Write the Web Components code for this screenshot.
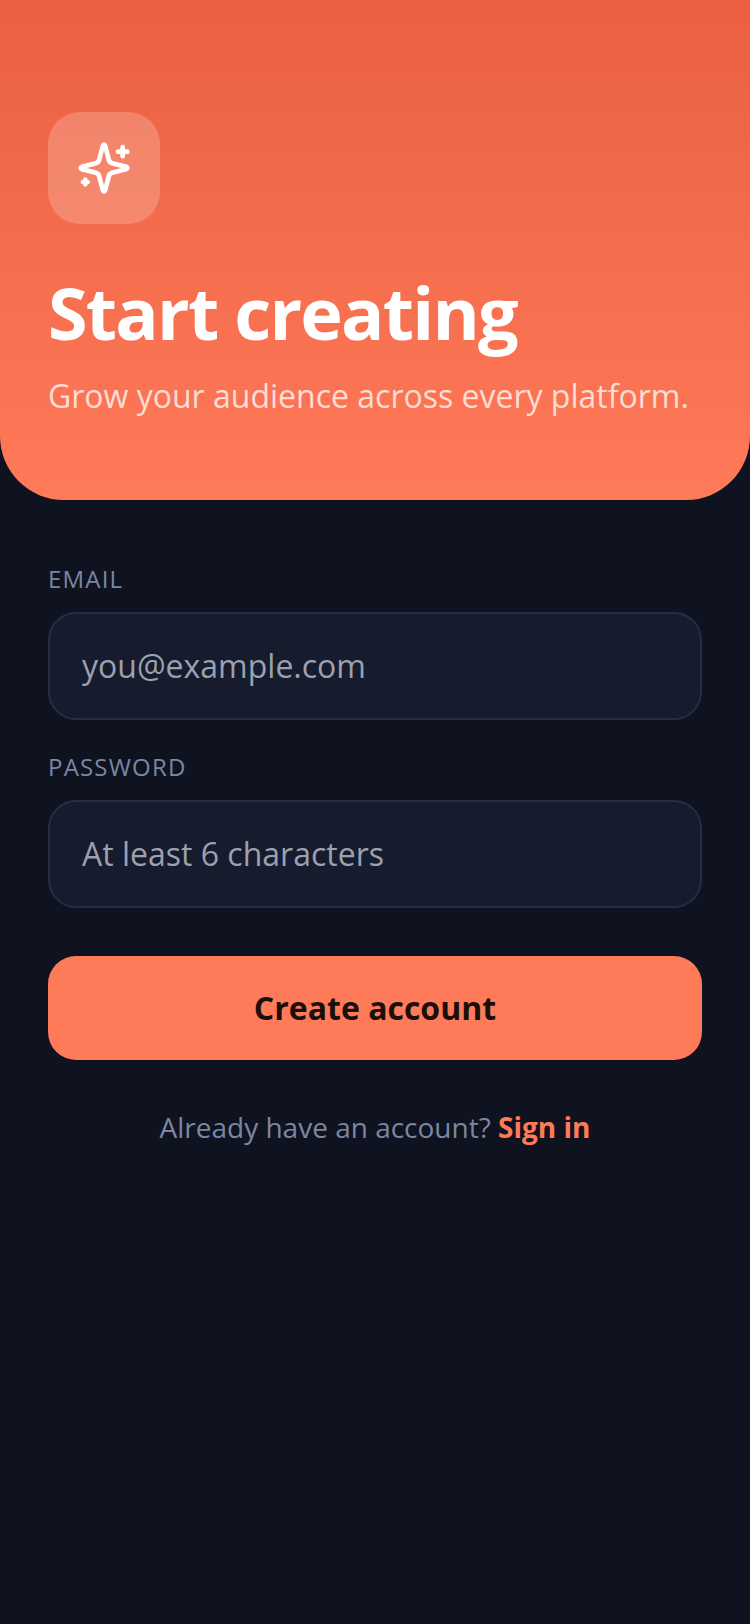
<!DOCTYPE html>
<html><head><meta charset="utf-8"><style>
html,body{margin:0;padding:0;background:#0f131f;}
body{font-family:"Open Sans",sans-serif;width:750px;height:1624px;overflow:hidden;}
</style></head><body>
<signup-screen>
<hero-panel title-text="Start creating" sub="Grow your audience across every platform."></hero-panel>
<form-panel>
<text-field label="EMAIL" placeholder="you@example.com"></text-field>
<text-field label="PASSWORD" placeholder="At least 6 characters"></text-field>
<primary-button>Create account</primary-button>
<p-footer>Already have an account? <b>Sign in</b></p-footer>
</form-panel>
</signup-screen>
<script>
function def(name,html,init){customElements.define(name,class extends HTMLElement{constructor(){super();this.attachShadow({mode:'open'}).innerHTML=html;}connectedCallback(){if(init)init(this);}});}
def('signup-screen',`<style>:host{display:flex;flex-direction:column;width:750px;height:1624px;background:#0f131f}</style><slot></slot>`);
def('hero-panel',`<style>
:host{display:block;box-sizing:border-box;height:500px;padding:112px 48px 0;border-radius:0 0 64px 64px;background:linear-gradient(180deg,#ea6040 0%,#ff7a59 100%)}
.ic{width:112px;height:112px;box-sizing:border-box;border-radius:32px;background:rgba(255,255,255,.2);display:flex;align-items:center;justify-content:center}
h1{margin:45px 0 0;font-size:72px;line-height:86px;font-weight:700;letter-spacing:-1.8px;color:#fff}
p{margin:19px 0 0;font-size:32px;line-height:44px;color:rgba(255,255,255,.75)}
</style><div class="ic"><svg width="56" height="56" viewBox="0 0 24 24" fill="none" stroke="#fff" stroke-width="2" stroke-linecap="round" stroke-linejoin="round"><path d="M9.937 15.5A2 2 0 0 0 8.5 14.063l-6.135-1.582a.5.5 0 0 1 0-.962L8.5 9.936A2 2 0 0 0 9.937 8.5l1.582-6.135a.5.5 0 0 1 .963 0L14.063 8.5A2 2 0 0 0 15.5 9.937l6.135 1.581a.5.5 0 0 1 0 .964L15.5 14.063a2 2 0 0 0-1.437 1.437l-1.582 6.135a.5.5 0 0 1-.963 0z"/><path d="M20 3v4"/><path d="M22 5h-4"/><path d="M4 17v2"/><path d="M5 18H3"/></svg></div><h1></h1><p></p>`,el=>{el.shadowRoot.querySelector('h1').textContent=el.getAttribute('title-text');el.shadowRoot.querySelector('p').textContent=el.getAttribute('sub');});
def('form-panel',`<style>:host{display:block;padding:63px 48px 0}</style><slot></slot>`);
def('text-field',`<style>
:host{display:block;margin-bottom:31px}
label{display:block;font-size:24px;line-height:32px;letter-spacing:1.2px;color:#7a86a3;margin-bottom:17px}
.b{box-sizing:border-box;height:108px;border:2px solid #262d48;border-radius:28px;background:#161b2e;padding:0 32px 1px;display:flex;align-items:center;font-size:32px;color:#9ba1ad}
</style><label></label><div class="b"></div>`,el=>{el.shadowRoot.querySelector('label').textContent=el.getAttribute('label');el.shadowRoot.querySelector('.b').textContent=el.getAttribute('placeholder');});
def('primary-button',`<style>:host{display:flex;box-sizing:border-box;padding-bottom:2px;align-items:center;justify-content:center;height:104px;margin-top:48px;border-radius:28px;background:#ff7a59;color:#1a0f0a;font-size:32px;font-weight:700}</style><slot></slot>`);
def('p-footer',`<style>:host{display:block;margin-top:47px;text-align:center;font-size:28px;line-height:40px;color:#7a86a3}::slotted(b){color:#ff7a59;font-weight:700}</style><slot></slot>`);
</script>
</body></html>
